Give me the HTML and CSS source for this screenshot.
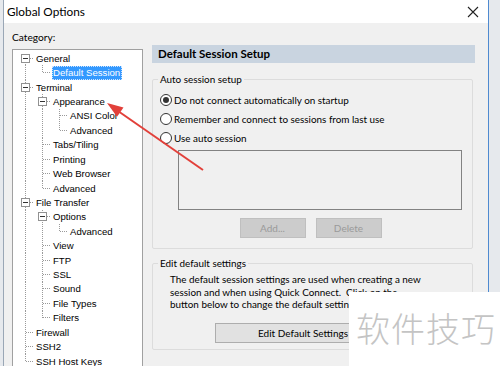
FILE: index.html
```html
<!DOCTYPE html>
<html lang="en">
<head>
    <meta charset="UTF-8">
    <title>Global Options</title>
    <link rel="stylesheet" href="styles.css">
</head>
<body>
    <div class="window">
        <div class="titlebar">
            <span class="title">Global Options</span>
            <svg class="close" width="12" height="12" viewBox="0 0 12 12">
                <path d="M1 1L11 11M11 1L1 11" stroke="#222" stroke-width="1.1" fill="none"/>
            </svg>
        </div>

        <div class="dlg-body">
            <div class="left-col">
                <div class="cat-label">Category:</div>
                <div class="tree">
                    <div class="row"><i class="g down"><b class="pm"></b></i><span class="lbl">General</span></div>
                    <div class="row"><i class="g pipe"></i><i class="g elbow"></i><span class="lbl sel">Default Session</span></div>
                    <div class="row"><i class="g tee"><b class="pm"></b></i><span class="lbl">Terminal</span></div>
                    <div class="row"><i class="g pipe"></i><i class="g tee"><b class="pm"></b></i><span class="lbl">Appearance</span></div>
                    <div class="row"><i class="g pipe"></i><i class="g pipe"></i><i class="g tee"></i><span class="lbl">ANSI Color</span></div>
                    <div class="row"><i class="g pipe"></i><i class="g pipe"></i><i class="g elbow"></i><span class="lbl">Advanced</span></div>
                    <div class="row"><i class="g pipe"></i><i class="g tee"></i><span class="lbl">Tabs/Tiling</span></div>
                    <div class="row"><i class="g pipe"></i><i class="g tee"></i><span class="lbl">Printing</span></div>
                    <div class="row"><i class="g pipe"></i><i class="g tee"></i><span class="lbl">Web Browser</span></div>
                    <div class="row"><i class="g pipe"></i><i class="g elbow"></i><span class="lbl">Advanced</span></div>
                    <div class="row"><i class="g tee"><b class="pm"></b></i><span class="lbl">File Transfer</span></div>
                    <div class="row"><i class="g pipe"></i><i class="g tee"><b class="pm"></b></i><span class="lbl">Options</span></div>
                    <div class="row"><i class="g pipe"></i><i class="g pipe"></i><i class="g elbow"></i><span class="lbl">Advanced</span></div>
                    <div class="row"><i class="g pipe"></i><i class="g tee"></i><span class="lbl">View</span></div>
                    <div class="row"><i class="g pipe"></i><i class="g tee"></i><span class="lbl">FTP</span></div>
                    <div class="row"><i class="g pipe"></i><i class="g tee"></i><span class="lbl">SSL</span></div>
                    <div class="row"><i class="g pipe"></i><i class="g tee"></i><span class="lbl">Sound</span></div>
                    <div class="row"><i class="g pipe"></i><i class="g tee"></i><span class="lbl">File Types</span></div>
                    <div class="row"><i class="g pipe"></i><i class="g elbow"></i><span class="lbl">Filters</span></div>
                    <div class="row"><i class="g tee"></i><span class="lbl">Firewall</span></div>
                    <div class="row"><i class="g tee"></i><span class="lbl">SSH2</span></div>
                    <div class="row"><i class="g elbow"></i><span class="lbl">SSH Host Keys</span></div>
                </div>
            </div>

            <div class="right-col">
                <div class="page-header">Default Session Setup</div>

                <fieldset class="group group-auto">
                    <legend>Auto session setup</legend>
                    <label class="radio"><span class="dot checked"></span>Do not connect automatically on startup</label>
                    <label class="radio"><span class="dot"></span>Remember and connect to sessions from last use</label>
                    <label class="radio"><span class="dot"></span>Use auto session</label>
                    <div class="listbox"></div>
                    <div class="btn-row">
                        <button class="btn" disabled>Add...</button>
                        <button class="btn" disabled>Delete</button>
                    </div>
                </fieldset>

                <fieldset class="group group-edit">
                    <legend>Edit default settings</legend>
                    <p class="note">The default session settings are used when creating a new<br>session and when using Quick Connect.&nbsp; Click on the<br>button below to change the default settings.</p>
                    <div class="edit-row">
                        <button class="btn btn-edit">Edit Default Settings</button>
                    </div>
                </fieldset>
            </div>
        </div>
    </div>

    <!-- annotation arrow drawn over the screenshot -->
    <svg class="arrow" width="500" height="366" viewBox="0 0 500 366">
        <line x1="203" y1="170" x2="118" y2="111" stroke="#e2403a" stroke-width="2"/>
        <polygon points="107,103 123.5,107.6 117,116.8" fill="#e2403a"/>
    </svg>

    <div class="watermark">软件技巧</div>
</body>
</html>
```

FILE: styles.css
```css
body {
    margin: 0;
    width: 500px;
    height: 366px;
    overflow: hidden;
    background-color: #e6e9ed;
    position: relative;
    font-family: "Liberation Sans", Arial, sans-serif;
    color: #000;
}

.window {
    margin-left: 3px;
    width: 484px;
    height: 380px;
    background-color: #f0f0f0;
    border-left: 1px solid #9aa7b6;
    border-right: 1px solid #4f8ad0;
}

.titlebar {
    height: 23px;
    background-color: #fff;
    display: flex;
    align-items: center;
    justify-content: space-between;
    padding: 0 9px 0 3px;
}

.title {
    font-family: Lato, "Liberation Sans", sans-serif;
    font-size: 11.8px;
}

.dlg-body {
    display: flex;
    align-items: flex-start;
    gap: 9px;
    padding: 7px 13px 0 8px;
}

/* category tree */

.left-col {
    width: 131px;
    flex: none;
}

.cat-label {
    font-family: Lato, "Liberation Sans", sans-serif;
    font-size: 10.2px;
    line-height: 14px;
    margin-bottom: 5px;
}

.tree {
    height: 330px;
    background-color: #fff;
    border: 1px solid #a0a0a0;
    padding: 1px 0 0 4px;
    font-size: 9.6px;
}

.row {
    display: flex;
    align-items: center;
    height: 14.43px;
}

.g {
    --v: repeating-linear-gradient(#9a9a9a 0 1px, transparent 1px 2px);
    --h: repeating-linear-gradient(to right, #9a9a9a 0 1px, transparent 1px 2px);
    flex: none;
    width: 17px;
    height: 100%;
    display: flex;
    align-items: center;
    justify-content: center;
}

.pipe {
    background: var(--v) 8px 0 / 1px 100% no-repeat;
}

.tee {
    background: var(--h) 9px 50% / 8px 1px no-repeat,
                var(--v) 8px 0 / 1px 100% no-repeat;
}

.elbow {
    background: var(--h) 9px 50% / 8px 1px no-repeat,
                var(--v) 8px 0 / 1px 50% no-repeat;
}

.down {
    background: var(--h) 9px 50% / 8px 1px no-repeat,
                var(--v) 8px 100% / 1px 50% no-repeat;
}

.pm {
    width: 7px;
    height: 7px;
    margin-left: -1px;
    border: 1px solid #919191;
    background: linear-gradient(#333, #333) center / 5px 1px no-repeat, #fff;
}

.lbl {
    padding: 0 1px;
    margin-left: 1px;
    line-height: 13px;
    white-space: nowrap;
}

.lbl.sel {
    background-color: #3399ff;
    color: #fff;
    outline: 1px dotted #cfe4ff;
    outline-offset: -1px;
    line-height: 14px;
    padding: 0 2px 0 1px;
}

/* right page */

.right-col {
    flex: 1;
    margin-top: 15px;
    font-family: Lato, "Liberation Sans", sans-serif;
    font-size: 9.9px;
}

.page-header {
    height: 18px;
    line-height: 18px;
    background-color: #c9d4e0;
    padding-left: 6px;
    font-weight: bold;
    font-size: 11.5px;
}

.group {
    margin: 10px 2px 0 0;
    padding: 0;
    border: 1px solid #dcdcdc;
    border-radius: 2px;
}

.group legend {
    margin-left: 5px;
    padding: 0 2px 0 2px;
    line-height: 13px;
}

.group-auto {
    padding: 4px 0 10px 0;
}

.radio {
    display: flex;
    align-items: center;
    height: 19px;
    padding-left: 7px;
}

.dot {
    width: 10px;
    height: 10px;
    margin-right: 2px;
    border: 1px solid #333;
    border-radius: 50%;
    background-color: #fff;
    display: flex;
    align-items: center;
    justify-content: center;
}

.dot.checked::after {
    content: "";
    width: 6px;
    height: 6px;
    border-radius: 50%;
    background-color: #333;
}

.listbox {
    margin: 3px 0 0 25px;
    width: 282px;
    height: 58px;
    border: 1px solid #828282;
    background-color: #f0f0f0;
}

.btn-row {
    display: flex;
    justify-content: center;
    gap: 10px;
    margin-top: 8px;
    padding-right: 4px;
}

.btn {
    font-family: Lato, "Liberation Sans", sans-serif;
    font-size: 10px;
    height: 20px;
    width: 66px;
    padding: 0;
    border: 1px solid #adadad;
    background-color: #e1e1e1;
    color: #000;
}

.btn:disabled {
    background-color: #cccccc;
    border-color: #bfbfbf;
    color: #9a9a9a;
}

.group-edit {
    margin-top: 8px;
    padding: 3px 0 6px 0;
}

.note {
    margin: 0 0 0 17px;
    line-height: 12.5px;
}

.edit-row {
    padding: 12px 0 0 62px;
}

.btn-edit {
    width: 176px;
}

/* overlays */

.arrow {
    position: absolute;
    left: 0;
    top: 0;
    pointer-events: none;
}

.watermark {
    position: absolute;
    left: 349px;
    top: 292px;
    width: 151px;
    height: 74px;
    background-color: #fff;
    color: #c4c4c4;
    font-family: "Noto Sans CJK SC", sans-serif;
    font-weight: 300;
    font-size: 34px;
    line-height: 72px;
    padding-left: 7px;
    box-sizing: border-box;
    white-space: nowrap;
    letter-spacing: 1px;
}
```
